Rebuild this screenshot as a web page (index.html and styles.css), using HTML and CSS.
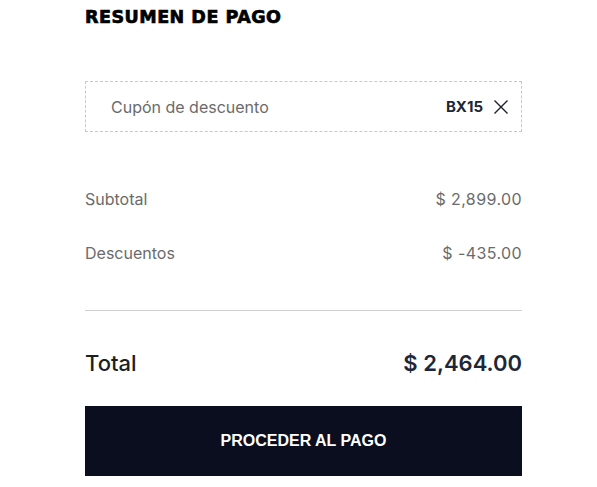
FILE: index.html
```html
<!DOCTYPE html>
<html lang="es">
<head>
    <meta charset="UTF-8">
    <meta name="viewport" content="width=device-width, initial-scale=1.0">
    <title>Resumen de pago</title>
    <link rel="stylesheet" href="styles.css">
</head>
<body>
    <div class="summary">
        <h2 class="summary-title">RESUMEN DE PAGO</h2>

        <div class="coupon">
            <span class="coupon-label">Cupón de descuento</span>
            <div class="coupon-code">
                <span>BX15</span>
                <button class="coupon-remove" title="Quitar cupón">
                    <svg width="16" height="16" viewBox="0 0 16 16"><path d="M1.5 1.5 L14.5 14.5 M14.5 1.5 L1.5 14.5" stroke="#1b1f2a" stroke-width="1.4" fill="none"/></svg>
                </button>
            </div>
        </div>

        <div class="rows">
            <div class="row"><span>Subtotal</span><span class="amount">$ 2,899.00</span></div>
            <div class="row"><span>Descuentos</span><span class="amount">$ -435.00</span></div>
        </div>

        <div class="total">
            <span class="total-label">Total</span>
            <span class="total-value">$ 2,464.00</span>
        </div>

        <button class="pay-btn">PROCEDER AL PAGO</button>
    </div>
</body>
</html>
```

FILE: styles.css
```css
body {
    margin: 0;
    padding: 0;
    background-color: #fff;
    font-family: Inter, "Liberation Sans", sans-serif;
    color: #333;
}
.summary {
    width: 437px;
    margin-left: 85px;
    padding-top: 6px;
}
.summary-title {
    margin: 0;
    font-family: "DejaVu Sans", sans-serif;
    font-weight: bold;
    font-size: 17.5px;
    letter-spacing: 0.5px;
    line-height: 22px;
    color: #000;
    -webkit-text-stroke: 0.7px #000;
}
.coupon {
    margin-top: 53px;
    height: 49px;
    border: 1px dashed #c8c8c8;
    display: flex;
    justify-content: space-between;
    align-items: center;
    padding: 0 12px 0 25px;
}
.coupon-label {
    font-size: 16px;
    color: #6b6b6b;
}
.coupon-code {
    display: flex;
    align-items: center;
    gap: 10px;
    font-size: 15px;
    font-weight: bold;
    color: #1c2738;
}
.coupon-remove {
    border: none;
    background: none;
    padding: 0;
    display: flex;
    cursor: pointer;
}
.rows {
    padding-top: 57px;
    padding-bottom: 47px;
    border-bottom: 1px solid #cfcfcf;
    display: flex;
    flex-direction: column;
    gap: 34px;
}
.row {
    display: flex;
    justify-content: space-between;
    font-size: 16px;
    line-height: 20px;
    color: #6b6b6b;
}
.row .amount {
    letter-spacing: 0.4px;
}
.total {
    display: flex;
    justify-content: space-between;
    align-items: center;
    margin-top: 38px;
    line-height: 28px;
}
.total-label {
    font-size: 22px;
    font-weight: 500;
    color: #1e1e1e;
}
.total-value {
    font-size: 22px;
    font-weight: 600;
    color: #1c2738;
}
.pay-btn {
    display: block;
    width: 100%;
    height: 70px;
    margin-top: 29px;
    border: none;
    background-color: #0a0e1f;
    color: #fff;
    font-family: "Liberation Sans", Arial, sans-serif;
    font-weight: bold;
    font-size: 16px;
    cursor: pointer;
}
```
